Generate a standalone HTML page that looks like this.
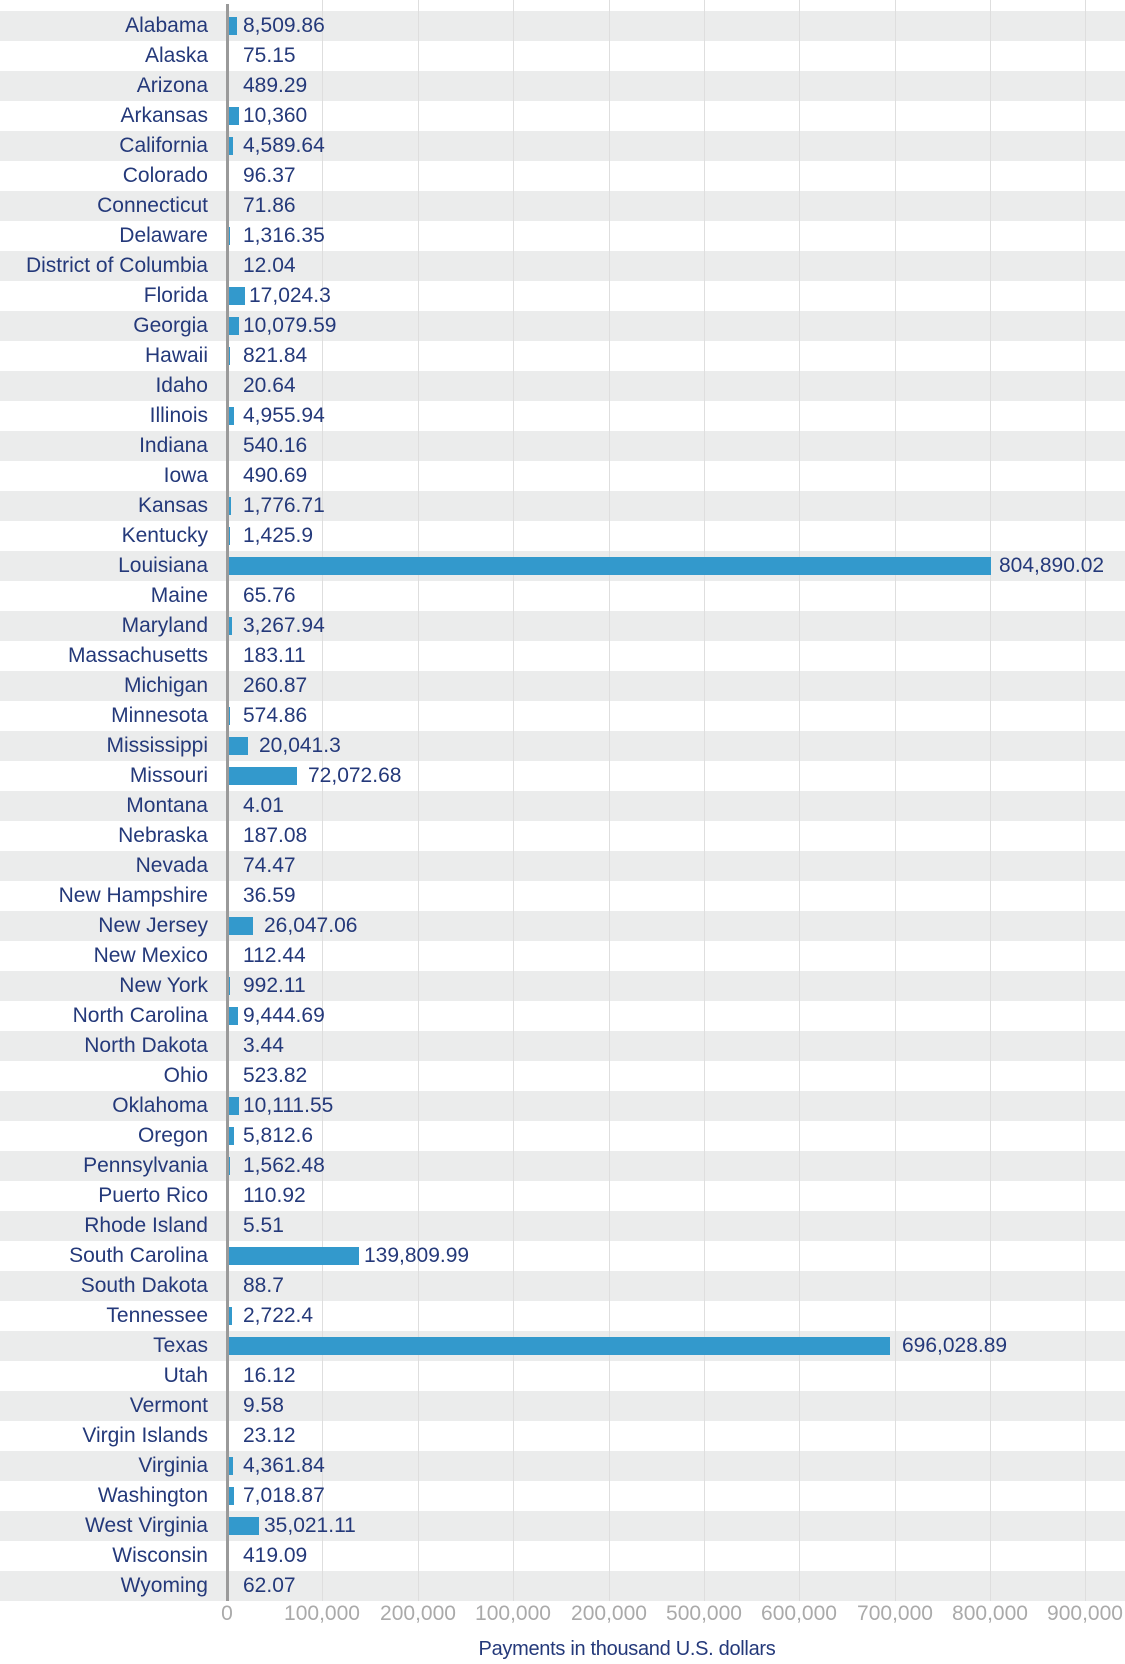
<!DOCTYPE html>
<html><head><meta charset="utf-8"><style>
*{margin:0;padding:0;box-sizing:border-box}
body{width:1125px;height:1664px;background:#fff;position:relative;overflow:hidden;font-family:"Liberation Sans",sans-serif;color:#24397a}
#bg{position:absolute;left:0;top:11px;width:1125px;height:1590px;background:repeating-linear-gradient(to bottom,#ebecec 0,#ebecec 30px,#fff 30px,#fff 60px)}
.g{position:absolute;top:0;height:1601px;width:1px;background:#dedede}
#rows{position:absolute;top:11px;left:0;width:1125px}
.r{height:30px;position:relative;line-height:30px;font-size:21px}
.n{position:absolute;right:917px;white-space:nowrap}
.r i{position:absolute;left:229px;top:6px;height:18px;background:#3399cc}
.r b{position:absolute;font-weight:normal;white-space:nowrap;left:243px}
.t{position:absolute;top:1601px;font-size:21px;color:#aaa;line-height:26px;transform:translateX(-50%)}
</style></head><body>
<div id="bg"></div>
<div class="g" style="left:322px"></div>
<div class="g" style="left:418px"></div>
<div class="g" style="left:513px"></div>
<div class="g" style="left:609px"></div>
<div class="g" style="left:704px"></div>
<div class="g" style="left:799px"></div>
<div class="g" style="left:895px"></div>
<div class="g" style="left:990px"></div>
<div class="g" style="left:1085px"></div>
<div id="rows">
<div class="r"><span class="n">Alabama</span><i style="width:8px"></i><b>8,509.86</b></div>
<div class="r"><span class="n">Alaska</span><b>75.15</b></div>
<div class="r"><span class="n">Arizona</span><b>489.29</b></div>
<div class="r"><span class="n">Arkansas</span><i style="width:10px"></i><b>10,360</b></div>
<div class="r"><span class="n">California</span><i style="width:4px"></i><b>4,589.64</b></div>
<div class="r"><span class="n">Colorado</span><b>96.37</b></div>
<div class="r"><span class="n">Connecticut</span><b>71.86</b></div>
<div class="r"><span class="n">Delaware</span><i style="width:1px"></i><b>1,316.35</b></div>
<div class="r"><span class="n">District of Columbia</span><b>12.04</b></div>
<div class="r"><span class="n">Florida</span><i style="width:16px"></i><b style="left:249px">17,024.3</b></div>
<div class="r"><span class="n">Georgia</span><i style="width:10px"></i><b>10,079.59</b></div>
<div class="r"><span class="n">Hawaii</span><i style="width:1px"></i><b>821.84</b></div>
<div class="r"><span class="n">Idaho</span><b>20.64</b></div>
<div class="r"><span class="n">Illinois</span><i style="width:5px"></i><b>4,955.94</b></div>
<div class="r"><span class="n">Indiana</span><b>540.16</b></div>
<div class="r"><span class="n">Iowa</span><b>490.69</b></div>
<div class="r"><span class="n">Kansas</span><i style="width:2px"></i><b>1,776.71</b></div>
<div class="r"><span class="n">Kentucky</span><i style="width:1px"></i><b>1,425.9</b></div>
<div class="r"><span class="n">Louisiana</span><i style="width:762px"></i><b style="left:999px">804,890.02</b></div>
<div class="r"><span class="n">Maine</span><b>65.76</b></div>
<div class="r"><span class="n">Maryland</span><i style="width:3px"></i><b>3,267.94</b></div>
<div class="r"><span class="n">Massachusetts</span><b>183.11</b></div>
<div class="r"><span class="n">Michigan</span><b>260.87</b></div>
<div class="r"><span class="n">Minnesota</span><i style="width:1px"></i><b>574.86</b></div>
<div class="r"><span class="n">Mississippi</span><i style="width:19px"></i><b style="left:259px">20,041.3</b></div>
<div class="r"><span class="n">Missouri</span><i style="width:68px"></i><b style="left:308px">72,072.68</b></div>
<div class="r"><span class="n">Montana</span><b>4.01</b></div>
<div class="r"><span class="n">Nebraska</span><b>187.08</b></div>
<div class="r"><span class="n">Nevada</span><b>74.47</b></div>
<div class="r"><span class="n">New Hampshire</span><b>36.59</b></div>
<div class="r"><span class="n">New Jersey</span><i style="width:24px"></i><b style="left:264px">26,047.06</b></div>
<div class="r"><span class="n">New Mexico</span><b>112.44</b></div>
<div class="r"><span class="n">New York</span><i style="width:1px"></i><b>992.11</b></div>
<div class="r"><span class="n">North Carolina</span><i style="width:9px"></i><b>9,444.69</b></div>
<div class="r"><span class="n">North Dakota</span><b>3.44</b></div>
<div class="r"><span class="n">Ohio</span><b>523.82</b></div>
<div class="r"><span class="n">Oklahoma</span><i style="width:10px"></i><b>10,111.55</b></div>
<div class="r"><span class="n">Oregon</span><i style="width:5px"></i><b>5,812.6</b></div>
<div class="r"><span class="n">Pennsylvania</span><i style="width:1px"></i><b>1,562.48</b></div>
<div class="r"><span class="n">Puerto Rico</span><b>110.92</b></div>
<div class="r"><span class="n">Rhode Island</span><b>5.51</b></div>
<div class="r"><span class="n">South Carolina</span><i style="width:130px"></i><b style="left:364px">139,809.99</b></div>
<div class="r"><span class="n">South Dakota</span><b>88.7</b></div>
<div class="r"><span class="n">Tennessee</span><i style="width:3px"></i><b>2,722.4</b></div>
<div class="r"><span class="n">Texas</span><i style="width:661px"></i><b style="left:902px">696,028.89</b></div>
<div class="r"><span class="n">Utah</span><b>16.12</b></div>
<div class="r"><span class="n">Vermont</span><b>9.58</b></div>
<div class="r"><span class="n">Virgin Islands</span><b>23.12</b></div>
<div class="r"><span class="n">Virginia</span><i style="width:4px"></i><b>4,361.84</b></div>
<div class="r"><span class="n">Washington</span><i style="width:5px"></i><b>7,018.87</b></div>
<div class="r"><span class="n">West Virginia</span><i style="width:30px"></i><b style="left:264px">35,021.11</b></div>
<div class="r"><span class="n">Wisconsin</span><b>419.09</b></div>
<div class="r"><span class="n">Wyoming</span><b>62.07</b></div>
</div>
<div style="position:absolute;left:226px;top:4px;width:3px;height:1597px;background:#9a9a9a"></div>
<div class="t" style="left:227px">0</div>
<div class="t" style="left:322px">100,000</div>
<div class="t" style="left:418px">200,000</div>
<div class="t" style="left:513px">100,000</div>
<div class="t" style="left:609px">200,000</div>
<div class="t" style="left:704px">500,000</div>
<div class="t" style="left:799px">600,000</div>
<div class="t" style="left:895px">700,000</div>
<div class="t" style="left:990px">800,000</div>
<div class="t" style="left:1085px">900,000</div>
<div style="position:absolute;left:0;width:1254px;top:1636px;text-align:center;font-size:20px;line-height:26px;letter-spacing:-0.3px">Payments in thousand U.S. dollars</div>
</body></html>
